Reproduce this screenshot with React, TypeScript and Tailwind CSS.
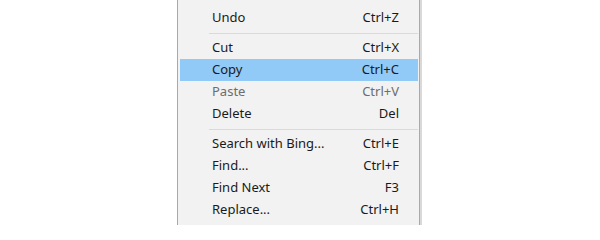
type Item =
  | { kind: "item"; label: string; shortcut: string; active?: boolean; disabled?: boolean }
  | { kind: "sep" };

const items: Item[] = [
  { kind: "item", label: "Undo", shortcut: "Ctrl+Z" },
  { kind: "sep" },
  { kind: "item", label: "Cut", shortcut: "Ctrl+X" },
  { kind: "item", label: "Copy", shortcut: "Ctrl+C", active: true },
  { kind: "item", label: "Paste", shortcut: "Ctrl+V", disabled: true },
  { kind: "item", label: "Delete", shortcut: "Del" },
  { kind: "sep" },
  { kind: "item", label: "Search with Bing...", shortcut: "Ctrl+E" },
  { kind: "item", label: "Find...", shortcut: "Ctrl+F" },
  { kind: "item", label: "Find Next", shortcut: "F3" },
  { kind: "item", label: "Replace...", shortcut: "Ctrl+H" },
];

export default function App() {
  return (
    <div className="w-[600px] h-[225px] bg-white overflow-hidden">
      <div className="ml-[177px] w-[245px] flex">
        {/* Menu */}
        <div
          className="w-[243px] bg-[#f2f2f2] border-l border-r border-[#a9a9a9] pt-[7px] pb-4 pl-[2px] pr-px text-[13px] text-[#1a1a1a]"
          style={{ fontFamily: '"Noto Sans", "Open Sans", sans-serif' }}
        >
          {items.map((it, i) =>
            it.kind === "sep" ? (
              <div key={i} className="h-[8px] flex items-center pl-[29px]">
                <div className="h-px w-full bg-[#dadada]" />
              </div>
            ) : (
              <div
                key={i}
                className={`h-[22px] flex items-center justify-between pl-[32px] pr-[19px] ${
                  it.active ? "bg-[#91c9f7]" : ""
                } ${it.disabled ? "text-[#6d6d6d]" : ""}`}
              >
                <span>{it.label}</span>
                <span>{it.shortcut}</span>
              </div>
            )
          )}
        </div>
        {/* Shadow */}
        <div className="w-[2px] bg-[#d9d9d9]" />
      </div>
    </div>
  );
}
